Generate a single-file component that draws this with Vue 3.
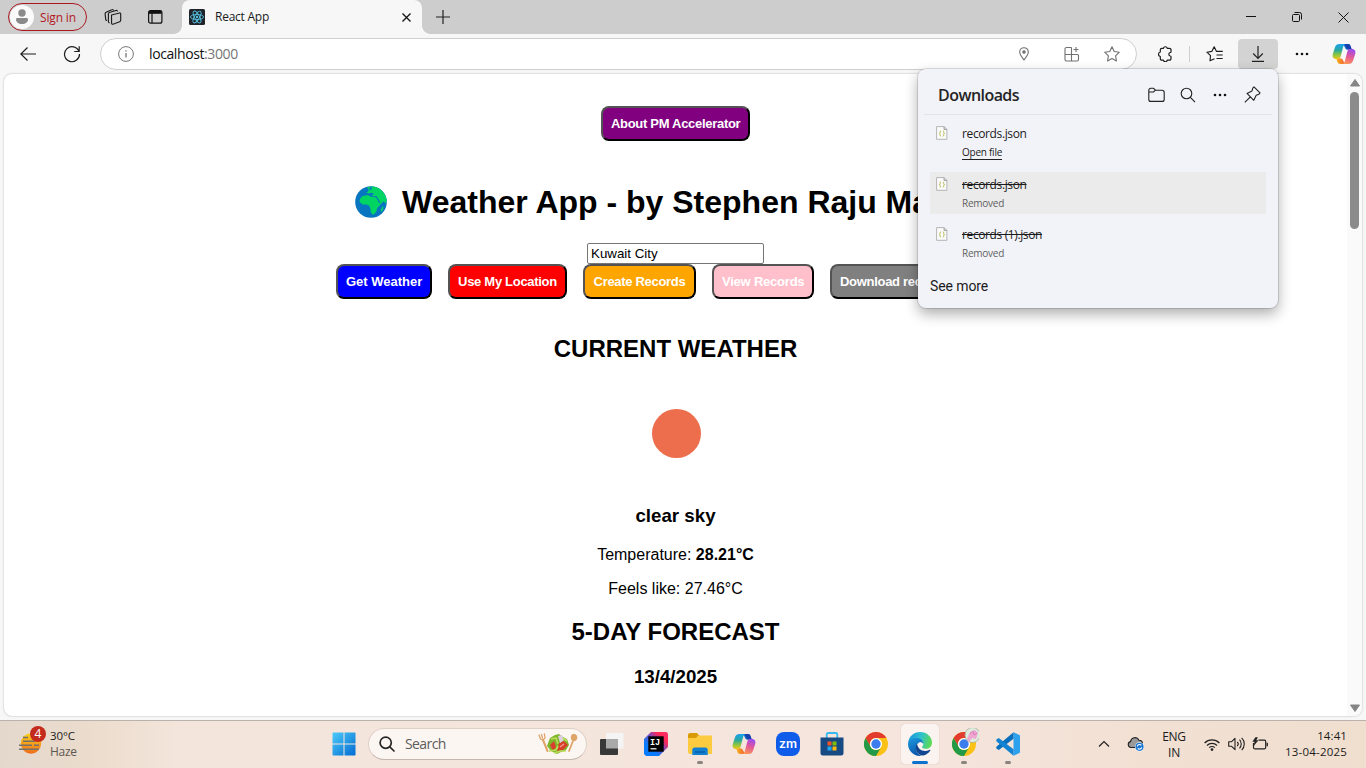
<script setup>
const actions = [
  { label: 'Get Weather', tone: 'blue' },
  { label: 'Use My Location', tone: 'red' },
  { label: 'Create Records', tone: 'orange' },
  { label: 'View Records', tone: 'pink' },
  { label: 'Download rec', tone: 'gray' },
]
const downloads = [
  { name: 'records.json', status: 'Open file', removed: false },
  { name: 'records.json', status: 'Removed', removed: true, active: true },
  { name: 'records (1).json', status: 'Removed', removed: true },
]
</script>

<template>
  <div class="screen">
    <svg class="defs" width="0" height="0">
      <defs>
        <linearGradient id="cpA" x1="0" y1="0" x2="0" y2="1">
          <stop offset="0" stop-color="#18a0f0" /><stop offset=".4" stop-color="#28a8a0" /><stop offset=".7" stop-color="#8cc63f" /><stop offset="1" stop-color="#f6c51d" />
        </linearGradient>
        <linearGradient id="cpB" x1="0.6" y1="0" x2="0.3" y2="1">
          <stop offset="0" stop-color="#9a4df0" /><stop offset=".45" stop-color="#e0569c" /><stop offset="1" stop-color="#ff9a52" />
        </linearGradient>
        <linearGradient id="cpC" x1="0" y1="0" x2="1" y2="0">
          <stop offset="0" stop-color="#1aa5ee" /><stop offset="1" stop-color="#1238a8" />
        </linearGradient>
        <linearGradient id="cpD" x1="0" y1="0" x2="1" y2="0">
          <stop offset="0" stop-color="#f9b51c" /><stop offset="1" stop-color="#ee3f3f" />
        </linearGradient>
        <symbol id="copilot" viewBox="0 0 24 24">
          <path d="M7.500 2h8.300c1.500 0 2.300.8 2.800 2.200l1.200 3.600h-3.700c-1.700 0-2.700-.7-3.200-2.300C12 3.200 10.500 2 7.500 2z" fill="url(#cpC)" />
          <path d="M16.500 22H8.200c-1.500 0-2.300-.8-2.800-2.200l-1.200-3.600h3.700c1.700 0 2.700.7 3.200 2.300.6 1.700 2.400 3.500 5.400 3.500z" fill="url(#cpD)" />
          <path d="M15 2h-.8c-1.600 0-2.500 1-3 2.700L8.800 14c-.6 2.200-1.800 3.300-3.800 3.300C1.200 17.300-.1 15 .9 11.800L3 5.200C3.800 2.900 5.200 2 7.500 2z" fill="url(#cpA)" />
          <path d="M9 22h.8c1.600 0 2.500-1 3-2.700L15.200 10c.6-2.200 1.800-3.300 3.800-3.300 3.800 0 5.100 2.300 4.100 5.500L21 18.800c-.8 2.300-2.200 3.200-4.500 3.200z" fill="url(#cpB)" />
          <path d="M14 2h1.800c1.500 0 2.300.8 2.800 2.200l.9 2.600c-3 0-4.500.7-5.500-1.800-.5-1.500-.8-2.200-1.800-2.600z" fill="#1540ae" />
        </symbol>
        <symbol id="chrome" viewBox="0 0 24 24">
          <circle cx="12" cy="12" r="12" fill="#fbc116" />
          <path d="M1.600 6A12 12 0 0 1 22.400 6H12a6 6 0 0 0-5.200 9z" fill="#e33b2e" />
          <path d="M1.600 6A12 12 0 0 0 12 24l5.200-9A6 6 0 0 1 6.800 15z" fill="#229a48" />
          <circle cx="12" cy="12" r="6.100" fill="#fff" /><circle cx="12" cy="12" r="4.700" fill="#3b7ded" />
        </symbol>
      </defs>
    </svg>

    <header class="tabs">
      <div class="signin">
        <span class="avatar"><svg width="24" height="24" viewBox="0 0 24 24" fill="#8a8a8a"><circle cx="12" cy="8" r="3.700" /><path d="M6 14.500c0-1 .6-1.500 1.500-1.500h9c.9 0 1.500.5 1.500 1.500 0 2.600-2.400 4.500-6 4.500s-6-1.900-6-4.500z" /></svg></span>
        <span>Sign in</span>
      </div>
      <svg class="workspaces" width="18" height="18" viewBox="0 0 18 18" fill="none" stroke="#1c1c1c" stroke-width="1.150" stroke-linejoin="round" stroke-linecap="round">
        <path d="M7.500 7l8-2c.8-.2 1.200.2 1.200.9v6.300c0 .8-.4 1.300-1.100 1.500L9 16.200c-.8.2-1.400-.2-1.400-1z" />
        <path d="M5.200 14.800c-.5-.2-.8-.5-.8-1.200V5.800c0-.7.300-1.100 1-1.300l6.500-2c.7-.2 1.200 0 1.500.5M2.500 12.500c-.4-.2-.7-.6-.8-1.200L1.100 5.800c0-.8.300-1.200 1-1.500l5.700-2.600c.6-.3 1.100-.2 1.500.2" />
      </svg>
      <svg class="tabmenu" width="15" height="14" viewBox="0 0 15 14" fill="none" stroke="#111"><rect x=".6" y=".6" width="13.300" height="12.600" rx="2" stroke-width="1.200" /><path d="M1 2.300h12.500" stroke-width="3" /><path d="M4 3v10" stroke-width="1.200" /></svg>
      <div class="tab">
        <svg width="16" height="16" viewBox="0 0 16 16"><rect width="16" height="16" rx="1.500" fill="#20232a" /><g fill="none" stroke="#53c1de" stroke-width=".9"><ellipse cx="8" cy="8" rx="6.600" ry="2.500" /><ellipse cx="8" cy="8" rx="6.600" ry="2.500" transform="rotate(60 8 8)" /><ellipse cx="8" cy="8" rx="6.600" ry="2.500" transform="rotate(120 8 8)" /></g><circle cx="8" cy="8" r="1.200" fill="#53c1de" /></svg>
        <span class="tab-title">React App</span>
        <svg width="9" height="9" viewBox="0 0 9 9" stroke="#111" stroke-width="1.300"><path d="M.5.500l8 8M8.500.500l-8 8" /></svg>
      </div>
      <svg class="newtab" width="14" height="14" viewBox="0 0 14 14" stroke="#222" stroke-width="1.200"><path d="M7 0v14M0 7h14" /></svg>
      <div class="winctl">
        <svg width="10" height="10" viewBox="0 0 10 10" stroke="#111"><path d="M0 4.500h10" /></svg>
        <svg width="10" height="10" viewBox="0 0 10 10" fill="none" stroke="#111"><rect x=".5" y="2.500" width="7" height="7" rx="1" /><path d="M2.500.500h5a2 2 0 0 1 2 2v5" /></svg>
        <svg width="11" height="11" viewBox="0 0 11 11" stroke="#111"><path d="M.5.500l10 10M10.500.500l-10 10" /></svg>
      </div>
    </header>

    <div class="toolbar">
      <svg class="back" width="16" height="14" viewBox="0 0 16 14" fill="none" stroke="#1c1c1c" stroke-width="1.200"><path d="M16 7H.8M7.500.500L.8 7l6.700 6.500" /></svg>
      <svg class="refresh" width="18" height="18" viewBox="0 0 18 18" fill="none" stroke="#1c1c1c" stroke-width="1.200"><path d="M16 6.500A7.500 7.500 0 1 0 16.500 9M16.200 1.300v5.200h-5" /></svg>
      <div class="address">
        <svg width="16" height="16" viewBox="0 0 16 16" fill="none" stroke="#777"><circle cx="8" cy="8" r="7.400" /><path d="M8 7v4.500M8 4.200v1.200" stroke-width="1.300" /></svg>
        <span class="url">localhost<i>:3000</i></span>
        <svg class="loc" width="10" height="14" viewBox="0 0 10 14" fill="none" stroke="#707070" stroke-width="1.100"><path d="M5 13C3.200 10.500.7 7.800.7 5a4.300 4.300 0 0 1 8.600 0c0 2.800-2.500 5.500-4.300 8z" /><circle cx="5" cy="5" r="1.200" fill="#707070" /></svg>
        <svg class="apps" width="16" height="16" viewBox="0 0 16 16" fill="none" stroke="#707070" stroke-width="1.100"><path d="M7.500 1.500h-5a1.500 1.500 0 0 0-1.500 1.500v10.500A1.500 1.500 0 0 0 2.500 15h10.500a1.500 1.500 0 0 0 1.500-1.500V9.500a1 1 0 0 0-1-1H1M7.500 1.500V15M12 1v5M9.500 3.500h5" /></svg>
        <svg class="star" width="16" height="16" viewBox="0 0 16 16" fill="none" stroke="#707070" stroke-width="1.100" stroke-linejoin="round"><path d="M8 .8l2.200 4.700 5.100.7-3.700 3.600.9 5.200L8 12.500 3.500 15l.9-5.200L.7 6.200l5.100-.7z" /></svg>
      </div>
      <svg class="puzzle" width="16" height="16" viewBox="0 0 16 16" fill="none" stroke="#1c1c1c" stroke-width="1.200" stroke-linejoin="round"><path d="M4.800 2.300h1.600a2 2 0 0 1 3.900 0h2.200a1.500 1.500 0 0 1 1.500 1.500v2a.7.700 0 0 1-.8.700 1.800 1.800 0 0 0 0 3.500.7.700 0 0 1 .8.700v2a1.500 1.500 0 0 1-1.500 1.500h-2.200a2 2 0 0 1-3.900 0H4.800a1.500 1.500 0 0 1-1.500-1.500v-2.200a2.300 2.300 0 0 1 0-4.500V3.800a1.500 1.500 0 0 1 1.500-1.500z" /></svg>
      <span class="vsep"></span>
      <svg class="favs" width="17" height="16" viewBox="0 0 17 16" fill="none" stroke="#1c1c1c" stroke-width="1.150" stroke-linejoin="round"><path d="M8.500 12.800L4 14.700l.5-5L.9 6.200l4.900-.8L8.200.8l2.300 4.600h6.300M10.500 9h6.200M10.500 12.500h6.200" /></svg>
      <span class="dlbtn"><svg width="12" height="16" viewBox="0 0 12 16" fill="none" stroke="#222" stroke-width="1.200"><path d="M6 0v12M1.200 7.500L6 12.300l4.800-4.800M0 15.400h12" /></svg></span>
      <svg class="dots" width="14" height="4" viewBox="0 0 14 4" fill="#111"><circle cx="2" cy="2" r="1.300" /><circle cx="7" cy="2" r="1.300" /><circle cx="12" cy="2" r="1.300" /></svg>
      <svg class="cp" width="24" height="24"><use href="#copilot" /></svg>
    </div>

    <main class="viewport">
      <div class="page">
        <button class="btn purple">About PM Accelerator</button>
        <h1>
          <svg width="32" height="32" viewBox="0 0 32 32"><circle cx="16" cy="16" r="15.800" fill="#0875c1" /><g fill="#00d563"><path d="M4.500 15c.5-2.500 2-4.500 4-5.200 2-.4 4-.6 5.500-.3l1.500 1.300 3 .3 2.500-.1 1.500 2.800 1.300 2.600 2.400.4-1.800 3.100-2.300 2.200-.3 2.500-2.200 3.300-2.200.7-1.700-2.700-.3-3.600-1.500-2.800-2.500-1-3.700.1-2.500-2z" /><path d="M12 1.200C17-.6 24 .8 28 6c2.500 3 3.600 6 3.800 9l-1.300 2.500-1.500-2-1.500.5-1.500 2.500-2.800-5-1.500-2.500-3.500-.3-1.500-1.700 2-1-1-1.200-2 1.200-4 .5-1.500-1.500 2.500-1 1-2.500z" /><path d="M27 21l1.500-1-.5 3.500-1.500 2.500-.8-2z" /></g><path d="M8 8.300l3-1.800 2.500 1 2.500-.7 2.500 1.700-2.500.8-3.500-.5-2.500.7zM14.500 1.500l2.500-.5-.5 2.500-2 .6zM18 10.200l3.500-.2.500 1.100-3 .2zM21.700 10.500l3.800 6.300-1 .2-3.500-6z" fill="#0875c1" /></svg>
          <span>Weather App - by Stephen Raju Ma</span>
        </h1>
        <div class="city">Kuwait City</div>
        <div class="actions">
          <button v-for="a in actions" :key="a.label" class="btn" :class="a.tone">{{ a.label }}</button>
        </div>
        <h2 class="current">CURRENT WEATHER</h2>
        <div class="weather-icon"><span></span></div>
        <h3 class="sky">clear sky</h3>
        <p class="temp">Temperature: <b>28.21°C</b></p>
        <p class="feels">Feels like: 27.46°C</p>
        <h2 class="forecast">5-DAY FORECAST</h2>
        <h3 class="day">13/4/2025</h3>
      </div>
      <div class="scroll">
        <svg width="10" height="8" viewBox="0 0 10 8"><path d="M5 .5L9.500 7H.5z" fill="#858585" stroke="#858585" stroke-linejoin="round" /></svg>
        <span class="thumb"></span>
        <svg width="10" height="8" viewBox="0 0 10 8"><path d="M5 7.500L9.500 1H.5z" fill="#858585" stroke="#858585" stroke-linejoin="round" /></svg>
      </div>
    </main>

    <section class="popup">
      <div class="pop-head">
        <strong>Downloads</strong>
        <svg width="17" height="16" viewBox="0 0 17 16" fill="none" stroke="#222" stroke-width="1.100"><path d="M.8 5V3.300A2 2 0 0 1 2.800 1.300h2.700l2 1.900H14A2.200 2.200 0 0 1 16.200 5.400v7A2 2 0 0 1 14.200 14.400H2.800a2 2 0 0 1-2-2zM.8 5h4.700l2-1.800" /></svg>
        <svg width="16" height="16" viewBox="0 0 16 16" fill="none" stroke="#222" stroke-width="1.100"><circle cx="6.500" cy="6.500" r="5.300" /><path d="M10.400 10.400l4.600 4.800" /></svg>
        <svg width="14" height="16" viewBox="0 0 14 16" fill="#111"><circle cx="2" cy="8" r="1.300" /><circle cx="7" cy="8" r="1.300" /><circle cx="12" cy="8" r="1.300" /></svg>
        <svg width="17" height="17" viewBox="0 0 17 17" fill="none" stroke="#222" stroke-width="1.100" stroke-linejoin="round"><path d="M10 .9l6 6-1.200 1.400-2.600 1-2.400 5L3 7.400l5-2.500.8-2.800zM6.400 10.800L.8 16.400" /></svg>
      </div>
      <div v-for="(d, i) in downloads" :key="i" class="dl" :class="{ active: d.active, removed: d.removed }">
        <svg width="12" height="14" viewBox="0 0 12 14"><path d="M.6.600h7.600l2.700 2.700v10H.6z" fill="#fbfbfb" stroke="#b4b4b4" /><path d="M8 .5v3h3" fill="#ccc" stroke="#999" stroke-width=".8" /><path d="M5 4.800c-1.300 0-.8 1.200-.9 2-.1.500-.4.700-.8.700.4 0 .7.200.8.700.1.800-.4 2 .9 2M6.800 4.800c1.300 0 .8 1.200.9 2 .1.500.4.700.8.700-.4 0-.7.200-.8.700-.1.800.4 2-.9 2" fill="none" stroke="#b8b954" stroke-width="1" /></svg>
        <div class="dl-text"><span class="name">{{ d.name }}</span><span class="status">{{ d.status }}</span></div>
      </div>
      <div class="more">See more</div>
    </section>

    <footer class="taskbar">
      <div class="widget">
        <span class="haze">
          <svg width="26" height="28" viewBox="0 0 26 28"><defs><linearGradient id="sun" x1="0" y1="0" x2="0" y2="1"><stop offset="0" stop-color="#fbd31c" /><stop offset="1" stop-color="#ef6c1a" /></linearGradient></defs><circle cx="12" cy="15.500" r="10.200" fill="url(#sun)" /><path d="M4 9.500h5M4 13.300h12M0 17.200h13M15 17.200h5M0 21.200h20" stroke="#75706a" stroke-width="1.600" /></svg>
          <b>4</b>
        </span>
        <div><div class="t">30°C</div><div class="h">Haze</div></div>
      </div>
      <div class="slot win"><svg width="24" height="24" viewBox="0 0 24 24"><defs><linearGradient id="wg" x1="0" y1="0" x2="24" y2="24" gradientUnits="userSpaceOnUse"><stop offset="0" stop-color="#4fcdfb" /><stop offset="1" stop-color="#0069d0" /></linearGradient></defs><path d="M1 .5h10.500v11H.5V1zM12.500.500H23l.5.500v10.500h-11zM.5 12.500h11v11H1l-.5-.5zM12.500 12.500h11V23l-.5.5H12.500z" fill="url(#wg)" /></svg></div>
      <div class="search">
        <svg width="16" height="16" viewBox="0 0 16 16" fill="none" stroke="#262626" stroke-width="1.700"><circle cx="6.700" cy="6.700" r="5.600" /><path d="M10.800 10.800L15 15" stroke-linecap="round" /></svg>
        <span>Search</span>
        <svg class="salad" width="40" height="22" viewBox="0 0 40 22"><g stroke="#dea468" stroke-linecap="round"><path d="M5 7l4.500 11" stroke-width="2" /><path d="M1 2l1.500 4L5 7l2-2-.6-4M3.500 1.500L4.500 5" stroke-width="1.300" fill="none" /><path d="M35 8l-4 10" stroke-width="1.800" /><ellipse cx="36" cy="4.500" rx="2.800" ry="3.200" fill="#dea468" /></g><path d="M9 13l3-8 5-3 4-1 4 3 4 2 2 6-3 5-5 2-4 2-6-3z" fill="#7fb52c" /><path d="M12 12l4-4 2 6-3 4zM21 10l5-2 4 4-5 5-6 1z" fill="#d93f2d" /><path d="M20 3l4-1 2 5-4 3z" fill="#ddd0e0" /><path d="M13 6l5-1 2 6M11 18l7-1 2-4M16 20l7-2 5 0M25 5l4 3" stroke="#b9dc59" stroke-width="1.700" fill="none" /><path d="M22 14l4-3" stroke="#f3a090" stroke-width="1.200" /></svg>
      </div>
      <div class="slot"><svg width="24" height="24" viewBox="0 0 24 24"><rect x="6" y="1" width="17.500" height="15.500" rx="1" fill="#f4f4f4" /><rect x="0" y="7" width="18" height="16" rx="1" fill="#383838" /><path d="M6 7h12v9.500H6z" fill="#a9a9a9" /></svg></div>
      <div class="slot"><svg width="24" height="24" viewBox="0 0 24 24"><defs><linearGradient id="ij" x1="0" y1="1" x2="1" y2="0"><stop offset=".3" stop-color="#087cfa" /><stop offset=".55" stop-color="#7a4cc0" /><stop offset=".75" stop-color="#fe2857" /><stop offset="1" stop-color="#f9326a" /></linearGradient></defs><path d="M7 0h15.500L24 1.500V15l-9 9H2l-2-2V7z" fill="url(#ij)" /><path d="M4.300 4.300h15.400v15.400H4.300z" fill="#000" /><path d="M6.500 16.800h6" stroke="#fff" stroke-width="1.200" /><text x="6" y="12.600" font-family="Liberation Mono" font-weight="700" font-size="8.500" fill="#fff">IJ</text></svg></div>
      <div class="slot"><svg width="24" height="24" viewBox="0 0 24 24"><path d="M0 3a2 2 0 0 1 2-2h7l3 3.500V9H0z" fill="#d99a06" /><path d="M0 6h8l2-2.500h14V22H1.500L0 20.500z" fill="#fccb40" /><path d="M4.300 23v-5a2.500 2.500 0 0 1 2.500-2.500h10.400a2.500 2.500 0 0 1 2.500 2.500v5z" fill="#1280d0" /><path d="M7 20h10" stroke="#0a5aa2" stroke-width="1.300" /></svg><i class="run"></i></div>
      <div class="slot"><svg width="24" height="24"><use href="#copilot" /></svg></div>
      <div class="slot"><svg width="24" height="24" viewBox="0 0 24 24"><rect width="24" height="24" rx="8" fill="#0f5bea" /><text x="3" y="16.200" font-family="Inter" font-weight="600" font-size="12.500" fill="#fff" textLength="18" lengthAdjust="spacingAndGlyphs">zm</text></svg></div>
      <div class="slot"><svg width="24" height="24" viewBox="0 0 24 24"><path d="M6.700 6V2.500A1.500 1.500 0 0 1 8.200 1h7.600a1.500 1.500 0 0 1 1.500 1.500V6" fill="none" stroke="#35b8ef" stroke-width="1.800" /><path d="M.5 5.500h23V21a2.500 2.500 0 0 1-2.500 2.500H3A2.500 2.500 0 0 1 .5 21z" fill="#174a82" /><path d="M7.500 9.500h4v4h-4z" fill="#f35325" /><path d="M12.500 9.500h4v4h-4z" fill="#81bc06" /><path d="M7.500 14.500h4v4h-4z" fill="#22a6ee" /><path d="M12.500 14.500h4v4h-4z" fill="#ffba08" /></svg></div>
      <div class="slot"><svg width="24" height="24"><use href="#chrome" /></svg></div>
      <div class="slot current"><svg width="24" height="24" viewBox="0 0 24 24"><defs><linearGradient id="eg" x1="0" y1=".3" x2="1" y2=".5"><stop offset="0" stop-color="#1794d8" /><stop offset=".5" stop-color="#2fc1cf" /><stop offset="1" stop-color="#5edc50" /></linearGradient><linearGradient id="eb" x1="0" y1="0" x2=".4" y2="1"><stop offset="0" stop-color="#1c9be0" /><stop offset="1" stop-color="#0c57ac" /></linearGradient></defs><path d="M.2 10.500C1 4.300 5.800 0 12 0c7 0 12 5 12 10.500 0 4-2.800 6.300-6.200 6.300-2.800 0-4-1-3.700-2 .9-1 1.200-1.700 1.200-2.800 0-3-3-5.300-6.800-5.300-4 0-7 1.800-8.300 3.800z" fill="url(#eg)" /><path d="M0 12c0-3.500 3.500-6 8.500-6 4 0 7 2.500 6.800 6-.5-1.300-2-2-3.300-2-2.500 1-4.500 3.500-4 7 .4 3.300 3 6 6 6.800-8 1.200-14-4.800-14-11.800z" fill="url(#eb)" /><path d="M9 11.500c-3.500 5 .5 12 6 12.100 3-.6 5.500-2.300 7.200-4.800.4-.7-.1-1.200-.8-.8-5 2.400-11.500.5-12.400-6.500z" fill="#10458f" /></svg><i class="run on"></i></div>
      <div class="slot"><svg width="30" height="32" viewBox="-3 -4 30 32"><use href="#chrome" width="24" height="24" /><circle cx="20.500" cy="3" r="7.500" fill="#dcebdc" stroke="#a3a598" stroke-width=".7" /><path d="M15 7l3-7 5-2 3 3-2 6-4-1-3 4z" fill="#efa6d0" /><path d="M18 2l3-3 1 4 3-2" fill="none" stroke="#d881bd" /></svg><i class="run"></i></div>
      <div class="slot"><svg width="24" height="24" viewBox="0 0 24 24"><path d="M17.500.2L23 2.800a1.500 1.500 0 0 1 1 1.400v15.600a1.500 1.500 0 0 1-1 1.400l-5.500 2.600z" fill="#2da0ee" /><path d="M17.500.2v6.500L2.800 18 .3 16.500v-1.800z" fill="#0a70bd" /><path d="M17.500 23.800v-6.500L2.800 6 .3 7.500v1.800z" fill="#1484d2" /></svg><i class="run"></i></div>
      <div class="tray">
        <svg width="12" height="12" viewBox="0 0 12 12" fill="none" stroke="#222" stroke-width="1.200"><path d="M1 8.500l5-5 5 5" /></svg>
        <svg class="cloud" width="18" height="16" viewBox="0 0 18 16"><path d="M4 11.500a3 3 0 0 1-.5-5.900A4.500 4.500 0 0 1 12 4.200a3.500 3.500 0 0 1 3.500 3.500c0 3-1.500 3.800-3 3.800z" fill="#999" stroke="#222" stroke-width="1.100" /><circle cx="12.500" cy="10.800" r="4.600" fill="#fff" /><circle cx="12.500" cy="10.800" r="4.100" fill="#1976d2" /><path d="M10.300 10.300a2.300 2.300 0 0 1 4-1M14.700 11.300a2.300 2.300 0 0 1-4 1" fill="none" stroke="#fff" stroke-width="1.100" /></svg>
        <div class="lang">ENG<br />IN</div>
        <svg class="wifi" width="16" height="13" viewBox="0 0 16 13" fill="none" stroke="#222" stroke-width="1.150"><path d="M.6 5a10.500 10.500 0 0 1 14.800 0M3 7.500a7 7 0 0 1 10 0M5.200 9.700a4 4 0 0 1 5.600 0" /><circle cx="8" cy="11.500" r=".8" fill="#222" /></svg>
        <svg class="vol" width="17" height="14" viewBox="0 0 17 14" fill="none" stroke="#222" stroke-width="1.100" stroke-linejoin="round"><path d="M.7 4.800h2.700L7 1.300v11.400L3.400 9.200H.7zM9.300 4.800a3.400 3.400 0 0 1 0 4.400M11.500 2.700a6.200 6.200 0 0 1 0 8.600M13.700.800a8.800 8.800 0 0 1 0 12.400" /></svg>
        <svg class="bat" width="17" height="14" viewBox="0 0 17 14" fill="none" stroke="#222" stroke-width="1.200"><path d="M6.500 3.200H12.500A1.200 1.200 0 0 1 13.700 4.400v6.200A1.200 1.200 0 0 1 12.500 11.800H2.700A1.200 1.200 0 0 1 1.500 10.600V6M15.300 5.800v3.400" /><path d="M3.500.500L.8 4.500h2l-1 4L6 3.500H4l1.500-3z" fill="#222" stroke-width=".5" /></svg>
        <div class="clock"><div class="c1">14:41</div><div class="c2">13-04-2025</div></div>
      </div>
    </footer>
  </div>
</template>

<style>
body { margin: 0; overflow: hidden; }
</style>

<style scoped>
* { box-sizing: border-box; }
svg { display: block; flex: none; }
.defs { position: absolute; }
.screen { position: relative; width: 1366px; height: 768px; overflow: hidden; background: #f7f7f7; display: flex; flex-direction: column; font-family: "Open Sans", "Noto Sans", sans-serif; font-size: 12px; color: #1b1b1b; }
.tabs { height: 34px; flex: none; background: #cdcdcd; display: flex; align-items: center; }
.signin { width: 79px; height: 28px; margin-left: 8px; border: 1px solid #a9191f; border-radius: 14px; display: flex; align-items: center; gap: 6px; color: #b3191f; letter-spacing: -0.15px; white-space: nowrap; }
.avatar { width: 24px; height: 24px; margin-left: 1px; background: #fafafa; border-radius: 50%; flex: none; }
.workspaces { margin-left: 17px; }
.tabmenu { margin-left: 26px; }
.tab { position: relative; width: 240px; height: 34px; margin-left: 19px; padding: 0 11px 0 7px; border-radius: 8px 8px 0 0; background: #f7f7f7; display: flex; align-items: center; }
.tab::before, .tab::after { content: ""; position: absolute; bottom: 0; width: 8px; height: 8px; }
.tab::before { left: -8px; background: radial-gradient(circle at 0 0, transparent 7.500px, #f7f7f7 8px); }
.tab::after { right: -8px; background: radial-gradient(circle at 100% 0, transparent 7.500px, #f7f7f7 8px); }
.tab-title { margin-left: 10px; flex: 1; line-height: 16px; letter-spacing: -0.25px; }
.newtab { margin-left: 14px; }
.winctl { margin-left: auto; margin-right: 17px; display: flex; gap: 36px; align-items: center; }
.toolbar { height: 40px; flex: none; display: flex; align-items: center; }
.back { margin-left: 20px; }
.refresh { margin-left: 27px; }
.address { width: 1037px; height: 32px; margin-left: 19px; padding: 0 16px 0 17px; border: 1px solid #cfcfcf; border-radius: 16px; background: #fff; display: flex; align-items: center; }
.url { margin-left: 15px; flex: 1; font-size: 14px; line-height: 18px; margin-top: -1px; letter-spacing: -0.4px; color: #111; }
.url i { font-style: normal; color: #767676; }
.apps { margin-left: 35px; }
.star { margin-left: 24px; }
.puzzle { margin-left: 20px; }
.vsep { width: 1px; height: 16px; margin-left: 16px; background: #cfcfcf; }
.favs { margin-left: 16px; }
.dlbtn { width: 40px; height: 30px; margin-left: 15px; border-radius: 4px; background: #d3d3d3; display: flex; align-items: center; justify-content: center; }
.dots { margin-left: 17px; }
.cp { margin-left: 23px; }
.viewport { width: 1358px; height: 642px; margin-left: 4px; flex: none; background: #fff; border-radius: 8px; box-shadow: 0 0 2px rgba(0, 0, 0, .3); display: flex; overflow: hidden; }
.page { width: 1343px; display: flex; flex-direction: column; align-items: center; padding-top: 32px; color: #000; font-family: "Liberation Sans", Arial, sans-serif; font-size: 16px; white-space: nowrap; }
.btn { height: 35px; padding: 0 8px; border: 2px outset #000; border-radius: 8px; font: bold 13px "Liberation Sans", Arial, sans-serif; letter-spacing: -0.3px; color: #fff; white-space: nowrap; }
.purple { width: 149px; background: purple; }
.blue { width: 96px; background: #00f; letter-spacing: 0; }
.red { width: 119px; background: red; }
.orange { width: 113px; background: orange; }
.pink { width: 102px; background: pink; letter-spacing: -0.22px; }
.gray { width: 185px; background: gray; text-align: left; }
h1 { width: 643px; margin: 43px 0 0 2px; display: flex; align-items: center; gap: 15px; font-size: 32px; line-height: 36px; }
.city { width: 177px; height: 21px; margin-top: 23px; padding: 0 3px; border: 1px solid #767676; border-radius: 2px; font-size: 13.333px; line-height: 19px; }
.actions { display: flex; gap: 16px; }
h2 { font-size: 24px; line-height: 28px; margin: 0; }
h3 { font-size: 18.72px; line-height: 22px; margin: 0; }
p { line-height: 18px; margin: 0; }
.current { margin-top: 36px; }
.weather-icon { width: 100px; height: 100px; margin-top: 20px; display: flex; align-items: center; justify-content: center; }
.weather-icon span { width: 49px; height: 49px; margin: 1px 0 0 2px; border-radius: 50%; background: #ec6e4c; }
.sky { margin-top: 22px; }
.temp { margin-top: 19px; }
.feels { margin-top: 16px; }
.forecast { margin-top: 20px; }
.day { margin-top: 20px; }
.scroll { width: 15px; background: #fafafa; display: flex; flex-direction: column; align-items: center; padding: 5px 0 4px; }
.thumb { width: 9px; height: 137px; margin: 5px 0 auto; border-radius: 5px; background: #8b8b8b; }
.popup { position: absolute; left: 918px; top: 69px; width: 360px; height: 239px; background: #f2f3f8; border-radius: 8px; box-shadow: 0 0 0 1px rgba(0, 0, 0, .12), 0 6px 14px rgba(0, 0, 0, .32); padding: 0 12px 0; }
.pop-head { height: 46px; margin: 0 -6px 6px; padding: 6px 11px 0 14px; border-bottom: 1px solid #e2e3e6; display: flex; align-items: center; gap: 16px; }
.pop-head svg:nth-of-type(1), .pop-head svg:nth-of-type(2) { margin-right: -0.5px; position: relative; left: -1.500px; }
.pop-head svg:nth-of-type(3) { margin-right: 1px; }
.pop-head strong { flex: 1; font-size: 16px; font-weight: 600; letter-spacing: -0.55px; color: #242424; }
.dl { height: 42px; margin-bottom: 8.500px; padding: 4px 0 0 6px; display: flex; }
.dl svg { margin-top: 1px; }
.dl-text { margin-left: 14px; display: flex; flex-direction: column; align-items: flex-start; }
.name { line-height: 17px; letter-spacing: -0.38px; }
.status { font-size: 10px; line-height: 13px; margin-top: 4px; letter-spacing: -0.25px; border-bottom: 1px solid #222; }
.removed .name { text-decoration: line-through; }
.removed .status { color: #5f5f5f; border-color: transparent; }
.active { background: #ebebeb; }
.more { font-family: Roboto, sans-serif; font-size: 14px; line-height: 20px; letter-spacing: -0.1px; margin-top: 12px; }
.taskbar { height: 48px; margin-top: auto; padding-bottom: 1px; flex: none; border-top: 1px solid #bab2ac; background: linear-gradient(90deg, #e4d8cd 0, #ebdccc 90px, #f4e5dc 180px, #f5e5dd 900px, #f2e0d3 1150px, #f0dfcf 1366px); display: flex; align-items: center; }
.widget { width: 322px; display: flex; padding-left: 19px; gap: 5px; line-height: 16px; }
.haze { position: relative; width: 26px; height: 28px; }
.haze b { position: absolute; left: 11px; top: -2px; width: 16px; height: 16px; border-radius: 50%; background: #c42b1c; color: #fff; font-weight: 400; text-align: center; }
.t { font-size: 11.500px; letter-spacing: -0.1px; }
.h { color: #5d5752; letter-spacing: -0.3px; }
.slot { position: relative; width: 44px; height: 40px; flex: none; display: flex; align-items: center; justify-content: center; }
.slot.win { width: 43px; }
.slot.current { width: 38px; margin: 0 3px; border-radius: 4px; background: #fbf3ef; box-shadow: 0 0 1px rgba(0, 0, 0, .25); }
.run { position: absolute; bottom: 0; left: 50%; margin-left: -3px; width: 6px; height: 3px; border-radius: 2px; background: #8b837e; }
.run.on { width: 16px; margin-left: -8px; background: #0c72cf; }
.search { width: 219px; height: 32px; margin: 0 3px 0 3px; padding: 0 7px 0 10px; border: 1px solid #dfd0c7; border-bottom-color: #c6b8b0; border-radius: 16px; background: #fcf6f3; display: flex; align-items: center; font-size: 14px; letter-spacing: -0.6px; color: #5c5c5c; }
.search span { margin-left: 10px; flex: 1; line-height: 18px; }
.salad { position: relative; left: -1px; }
.tray { margin-left: auto; padding-right: 19px; display: flex; align-items: center; line-height: 16px; }
.cloud { margin-left: 17px; }
.lang { width: 32px; margin-left: 13px; padding-top: 2px; text-align: center; letter-spacing: -0.3px; }
.wifi { margin-left: 14px; }
.vol { margin-left: 8px; }
.bat { margin-left: 7px; }
.clock { width: 78px; text-align: right; font-size: 11.500px; letter-spacing: 0.2px; }
.c1 { letter-spacing: 0.1px; }
</style>
